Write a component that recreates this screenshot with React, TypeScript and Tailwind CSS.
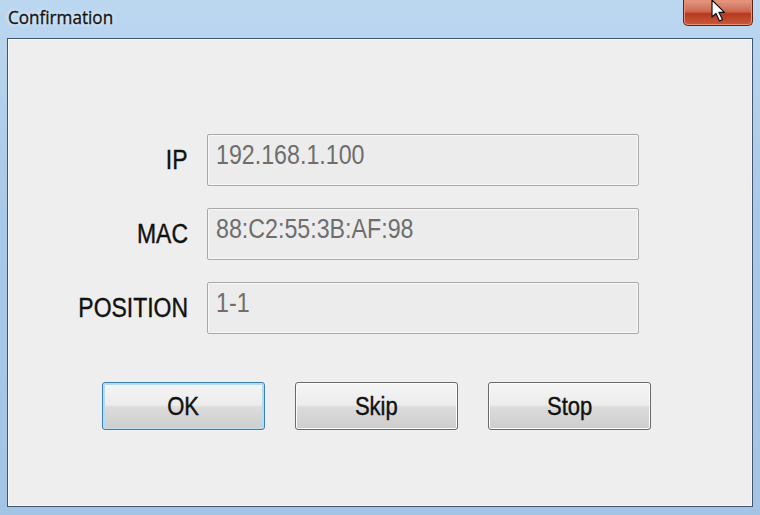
import React from 'react';

const fields = [
  { label: 'IP', value: '192.168.1.100' },
  { label: 'MAC', value: '88:C2:55:3B:AF:98' },
  { label: 'POSITION', value: '1-1' },
];

const buttons = [
  { label: 'OK', primary: true },
  { label: 'Skip', primary: false },
  { label: 'Stop', primary: false },
];

const DialogButton: React.FC<{ label: string; primary?: boolean }> = ({ label, primary }) => (
  <button
    className={`w-[163px] h-[48px] rounded-[3px] border flex items-center justify-center bg-[linear-gradient(to_bottom,#f5f5f5_0%,#ececec_48%,#dcdcdc_52%,#cdcdcd_100%)] ${
      primary
        ? 'border-[#3c7fb1] shadow-[inset_0_0_0_2px_#b6dcf2]'
        : 'border-[#6a6a6a] shadow-[inset_0_0_0_1px_#fbfbfb]'
    }`}
  >
    <span className="inline-block scale-x-[0.88] text-[25px] leading-none text-[#111111] [-webkit-text-stroke:0.4px_#111111] font-['Liberation_Sans',Arial,sans-serif]">
      {label}
    </span>
  </button>
);

export default function App() {
  return (
    <div className="relative w-[760px] h-[515px] flex flex-col bg-[linear-gradient(to_bottom,#bcd7f0_0%,#a9c9e8_40%,#a3c4e4_100%)] overflow-hidden">
      {/* Title bar */}
      <div className="h-[38px] flex items-start justify-between pl-[8px] pr-[7px] shrink-0">
        <span className="mt-[5px] inline-block origin-left scale-x-[0.9] text-[19px] leading-[24px] text-[#151515] [-webkit-text-stroke:0.35px_#151515] font-['Open_Sans','Noto_Sans',sans-serif] [text-shadow:0_0_6px_#ffffff]">
          Confirmation
        </span>
        <div className="w-[70px] h-[26px] rounded-b-[5px] border border-t-0 border-[#5a2418] bg-[linear-gradient(to_bottom,#e09a86_0%,#cf6a50_45%,#b8391f_55%,#c75a3c_100%)] shadow-[inset_0_0_0_1px_#e88f76]" />
      </div>

      {/* Content */}
      <div className="flex-1 mx-[7px] mb-[8px] border border-[#3f566e] bg-[#eeeeee] shadow-[inset_0_0_0_1px_#fafafa] flex flex-col pt-[95px]">
        <div className="grid grid-cols-[180px_432px] gap-x-[19px] gap-y-[22px]">
          {fields.map((f) => (
            <React.Fragment key={f.label}>
              <div className="flex items-center justify-end">
                <span className="inline-block origin-right scale-x-[0.85] text-[27px] leading-none text-[#111111] [-webkit-text-stroke:0.4px_#111111] font-['Liberation_Sans',Arial,sans-serif]">
                  {f.label}
                </span>
              </div>
              <div className="h-[52px] border border-[#a9a9a9] rounded-[2px] bg-[#ececec] shadow-[inset_0_0_0_1px_#f7f7f7] pl-[8px] pt-[7px]">
                <span className="inline-block origin-left scale-x-[0.86] text-[27px] leading-[27px] text-[#6e6e6e] font-['Liberation_Sans',Arial,sans-serif]">
                  {f.value}
                </span>
              </div>
            </React.Fragment>
          ))}
        </div>

        <div className="flex gap-[30px] ml-[94px] mt-[48px]">
          {buttons.map((b) => (
            <DialogButton key={b.label} label={b.label} primary={b.primary} />
          ))}
        </div>
      </div>

      {/* Mouse cursor over close button */}
      <svg className="absolute left-[711px] top-0 w-[18px] h-[24px]" viewBox="0 0 18 24">
        <path
          d="M1 0 L1 17 L5 13.5 L8.5 21 L11.5 19.6 L8 12.4 L13.5 12.4 Z"
          fill="#ffffff"
          stroke="#111111"
          strokeWidth="1.2"
          strokeLinejoin="round"
        />
      </svg>
    </div>
  );
}
